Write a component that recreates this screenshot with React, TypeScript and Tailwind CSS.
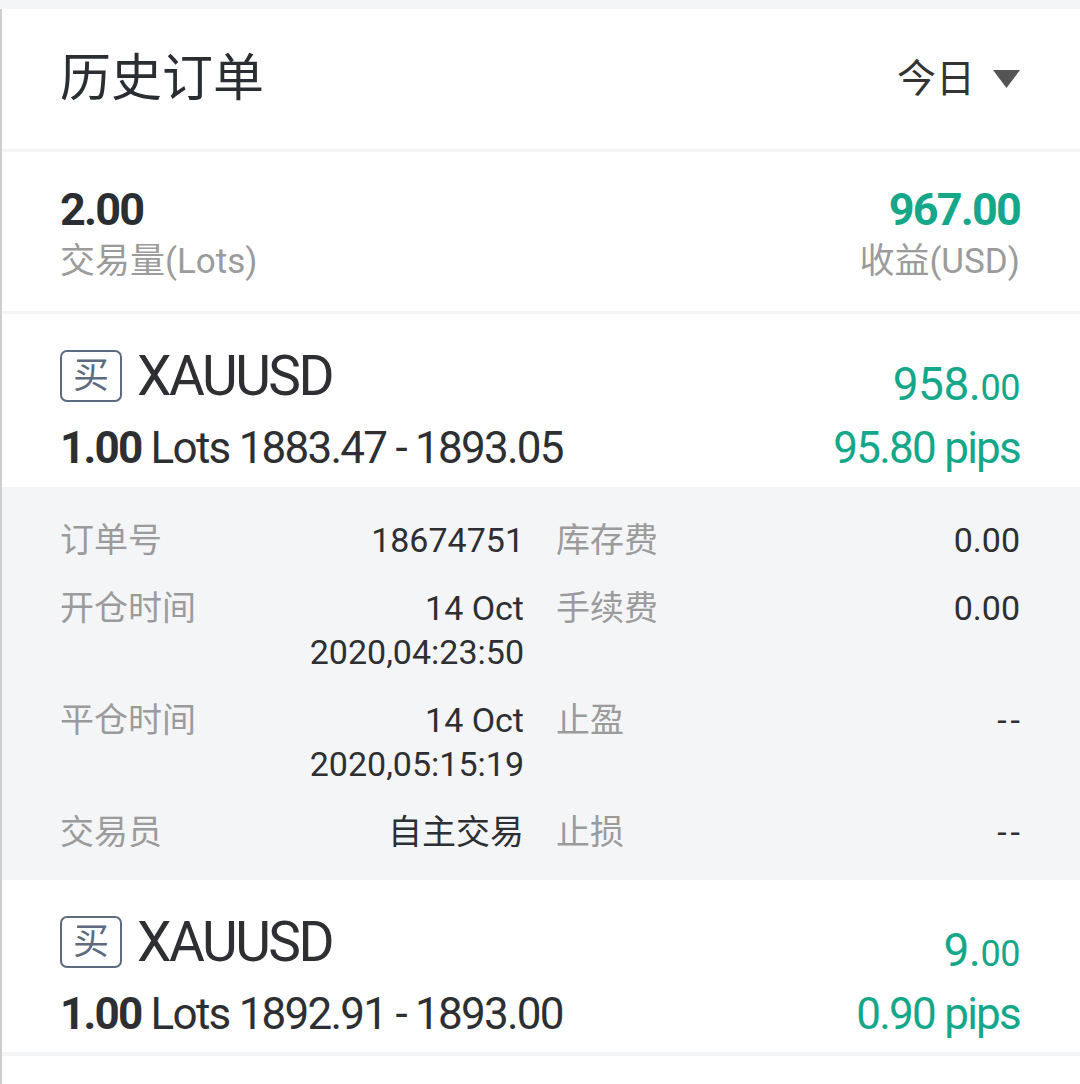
import React from "react";

type OrderProps = {
  lotsRange: string;
  profitMain: string;
  profitDec: string;
  pips: string;
};

function Order({ lotsRange, profitMain, profitDec, pips }: OrderProps) {
  return (
    <div className="pl-[58px] pr-[60px] pt-[32px] flex flex-col gap-[16px]">
      <div className="h-[60px] flex items-center justify-between">
        <div className="flex items-center gap-[15px]">
          <div className="w-[62px] h-[52px] rounded-[7px] border-2 border-[#5d6b80] flex items-center justify-center text-[36px] leading-[44px] text-[#5d6b80]">
            买
          </div>
          <span className="text-[55px] leading-[60px] tracking-[-0.045em] text-[#2d2f33]">
            XAUUSD
          </span>
        </div>
        <div className="mt-[26px] text-[#15a78a] leading-[52px] tracking-[-0.03em]">
          <span className="text-[46px]">{profitMain}</span>
          <span className="text-[36px]">{profitDec}</span>
        </div>
      </div>
      <div className="h-[52px] flex items-center justify-between">
        <div className="text-[44px] leading-[52px] tracking-[-0.04em] text-[#2d2f33]">
          <span className="font-bold">1.00</span> Lots {lotsRange}
        </div>
        <div className="text-[44px] leading-[52px] tracking-[-0.04em] text-[#15a78a]">
          {pips}
        </div>
      </div>
    </div>
  );
}

function Cell({ label, value }: { label: string; value: React.ReactNode }) {
  return (
    <div className="flex justify-between items-start text-[34px] leading-[44px]">
      <span className="text-[#9b9b9b] whitespace-nowrap">{label}</span>
      <span className="text-right text-[#2d2f33]">{value}</span>
    </div>
  );
}

function Dashes() {
  return (
    <span className="whitespace-nowrap inline-flex gap-[4px]">
      <span>-</span>
      <span>-</span>
    </span>
  );
}

export default function App() {
  return (
    <div className="w-[1080px] min-h-[1084px] bg-white font-['Roboto','Noto_Sans_CJK_SC',sans-serif]">
      <div className="h-[9px] bg-[#f4f5f7]" />
      <div className="border-l-2 border-[#cfcfcf] min-h-[1075px]">
        {/* header */}
        <div className="h-[140px] flex items-center justify-between pl-[58px] pr-[60px]">
          <div className="text-[51px] leading-[60px] text-[#2a2e33]">历史订单</div>
          <div className="flex items-center gap-[18px]">
            <span className="text-[39px] leading-[48px] text-[#333333]">今日</span>
            <svg width="27" height="18" viewBox="0 0 27 18">
              <polygon points="0,0 27,0 13.5,18" fill="#555555" />
            </svg>
          </div>
        </div>
        <div className="h-[3px] bg-[#f4f5f7]" />

        {/* summary */}
        <div className="pl-[58px] pr-[60px] pt-[30px] pb-[25px] flex justify-between">
          <div className="flex flex-col">
            <span className="text-[45px] leading-[56px] font-bold tracking-[-0.04em] text-[#2a2e33]">
              2.00
            </span>
            <span className="text-[35px] leading-[48px] text-[#9b9b9b]">交易量(Lots)</span>
          </div>
          <div className="flex flex-col items-end">
            <span className="text-[45px] leading-[56px] font-bold tracking-[-0.04em] text-[#15a78a]">
              967.00
            </span>
            <span className="text-[35px] leading-[48px] text-[#9b9b9b]">收益(USD)</span>
          </div>
        </div>
        <div className="h-[3px] bg-[#f4f5f7]" />

        {/* order 1 */}
        <div className="pb-[13px]">
          <Order
            lotsRange="1883.47 - 1893.05"
            profitMain="958."
            profitDec="00"
            pips="95.80 pips"
          />
        </div>

        {/* details */}
        <div className="bg-[#f4f5f7] pl-[58px] pr-[60px] pt-[31px] pb-[26px] grid grid-cols-2 gap-x-[32px] gap-y-[24px]">
          <Cell label="订单号" value="18674751" />
          <Cell label="库存费" value="0.00" />
          <Cell
            label="开仓时间"
            value={
              <>
                14 Oct
                <br />
                2020,04:23:50
              </>
            }
          />
          <Cell label="手续费" value="0.00" />
          <Cell
            label="平仓时间"
            value={
              <>
                14 Oct
                <br />
                2020,05:15:19
              </>
            }
          />
          <Cell label="止盈" value={<Dashes />} />
          <Cell label="交易员" value="自主交易" />
          <Cell label="止损" value={<Dashes />} />
        </div>

        {/* order 2 */}
        <div className="pb-[12px]">
          <Order
            lotsRange="1892.91 - 1893.00"
            profitMain="9."
            profitDec="00"
            pips="0.90 pips"
          />
        </div>
        <div className="h-[4px] bg-[#f4f5f7]" />
      </div>
    </div>
  );
}
